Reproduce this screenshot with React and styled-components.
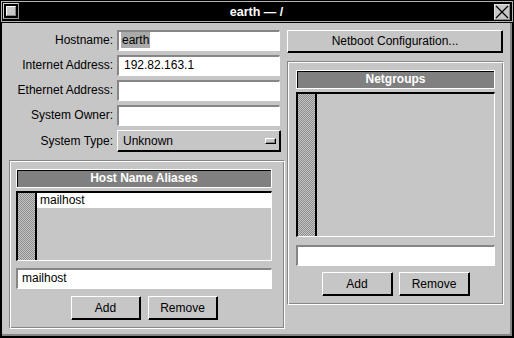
import React from "react";
import styled, { createGlobalStyle } from "styled-components";

const Global = createGlobalStyle`
  html, body { margin: 0; padding: 0; background: #000; }
  * { box-sizing: border-box; }
  body {
    font-family: "Liberation Sans", Arial, sans-serif;
    font-size: 12px;
    color: #000;
  }
`;

const grey = "#c6c6c6";
const dark = "#868686";

const Window = styled.div`
  width: 514px;
  height: 338px;
  background: #000;
  padding: 1px;
  display: flex;
  flex-direction: column;
`;

const TitleBar = styled.div`
  height: 21px;
  border: 1px solid #b4b4b4;
  display: flex;
  align-items: flex-start;
  padding: 1px 2px 0 1px;
`;

const MenuBox = styled.div`
  width: 16px;
  height: 16px;
  border: 1px solid #d0d0d0;
  border-right-color: #9a9a9a;
  border-bottom-color: #9a9a9a;
  background: #000;
  padding: 2px;
`;

const MenuInner = styled.div`
  width: 100%;
  height: 100%;
  background: ${grey};
  border: 1px solid #fff;
  border-right-color: ${dark};
  border-bottom-color: ${dark};
`;

const Title = styled.div`
  flex: 1;
  text-align: center;
  color: #fff;
  font-weight: bold;
  font-size: 12.5px;
  line-height: 18px;
`;

const CloseBox = styled.div`
  width: 16px;
  height: 16px;
  margin-top: 1px;
  background: ${grey};
  border: 1px solid #e0e0e0;
  border-right-color: ${dark};
  border-bottom-color: ${dark};
  display: flex;
`;

const Body = styled.div`
  flex: 1;
  margin: 1px 0 1px 1px;
  width: 510px;
  background: ${grey};
  border-right: 2px solid ${dark};
  border-bottom: 2px solid ${dark};
  display: grid;
  grid-template-columns: 276px 217px;
  column-gap: 2px;
  align-items: start;
  padding: 7px 0 0 7px;
`;

const Column = styled.div`
  display: flex;
  flex-direction: column;
`;

const Row = styled.div`
  display: grid;
  grid-template-columns: 104px ${p => p.$fieldWidth || 163}px;
  column-gap: 4px;
  margin-bottom: 4px;
`;

const Label = styled.div`
  text-align: right;
  line-height: ${p => p.$h || 21}px;
  white-space: nowrap;
`;

const Field = styled.div`
  height: 21px;
  background: #fff;
  border-style: solid;
  border-width: 2px 1px 1px 2px;
  border-color: ${dark} #fff #fff ${dark};
  padding-left: ${p => p.$pad || 3}px;
  line-height: 17px;
  white-space: nowrap;
  overflow: hidden;
`;

const Selected = styled.span`
  background: #ababab;
  padding: 1px 1px;
`;

const Raised = styled.div`
  background: ${grey};
  border-style: solid;
  border-width: 1px;
  border-color: #fff #000 #000 #fff;
  box-shadow: inset -1px -1px 0 #000;
`;

const OptionMenu = styled(Raised)`
  height: 22px;
  display: flex;
  align-items: center;
  justify-content: space-between;
  padding: 0 4px 0 5px;
`;

const Indicator = styled.div`
  width: 11px;
  height: 6px;
  background: ${grey};
  border: 1px solid #fff;
  border-right-color: #000;
  border-bottom-color: #000;
  box-shadow: inset -1px -1px 0 ${dark};
`;

const Button = styled(Raised)`
  width: ${p => p.$w}px;
  height: ${p => p.$h || 24}px;
  display: flex;
  align-items: center;
  justify-content: center;
  padding-bottom: 1px;
`;

// 홈이 파인 테두리 (etched in)
const Frame = styled.div`
  border: 1px solid;
  border-color: ${dark} #fff #fff ${dark};
  box-shadow: inset 1px 1px 0 #fff, inset -1px -1px 0 ${dark};
  padding: ${p => p.$pad};
  height: ${p => p.$h}px;
  margin-top: ${p => p.$mt}px;
  display: flex;
  flex-direction: column;
`;

const Header = styled.div`
  height: 19px;
  background: #808080;
  border: 1px solid #fff;
  box-shadow: inset 1px 1px 0 #000;
  color: #fff;
  font-weight: bold;
  text-align: center;
  line-height: 17px;
`;

const List = styled.div`
  margin-top: 3px;
  height: ${p => (p.$h ? `${p.$h}px` : "auto")};
  flex: ${p => (p.$h ? "none" : 1)};
  border-style: solid;
  border-width: 2px 1px 1px 2px;
  border-color: #000 #fff #fff #000;
  display: flex;
`;

const Stipple = styled.div`
  width: 19px;
  border-right: 2px solid #000;
  background: repeating-conic-gradient(#8c8c8c 0 25%, ${grey} 0 50%) 0 0 / 2px 2px;
`;

const Items = styled.div`
  flex: 1;
`;

const Item = styled.div`
  height: 15px;
  line-height: 15px;
  padding-left: 3px;
  background: ${p => (p.$selected ? "#fff" : "transparent")};
`;

const ListField = styled(Field)`
  margin-top: ${p => p.$mt}px;
`;

const Buttons = styled.div`
  display: flex;
  justify-content: center;
  gap: ${p => p.$gap}px;
  margin-top: ${p => p.$mt}px;
`;

const CloseIcon = () => (
  <svg width="14" height="14" viewBox="0 0 14 14">
    <path d="M1 1 L13 13 M13 1 L1 13" stroke="#000" strokeWidth="1.2" />
  </svg>
);

const fields = [
  { label: "Hostname:", value: "earth", selected: true },
  { label: "Internet Address:", value: "192.82.163.1" },
  { label: "Ethernet Address:", value: "" },
  { label: "System Owner:", value: "" }
];

export default function App() {
  return (
    <>
      <Global />
      <Window>
        <TitleBar>
          <MenuBox>
            <MenuInner />
          </MenuBox>
          <Title>earth — /</Title>
          <CloseBox>
            <CloseIcon />
          </CloseBox>
        </TitleBar>
        <Body>
          {/* 왼쪽: 호스트 정보 + 별칭 */}
          <Column>
            {fields.map(f => (
              <Row key={f.label}>
                <Label>{f.label}</Label>
                <Field $pad={f.selected ? 2 : 5}>
                  {f.selected ? <Selected>{f.value}</Selected> : f.value}
                </Field>
              </Row>
            ))}
            <Row $fieldWidth={164}>
              <Label $h={22}>System Type:</Label>
              <OptionMenu>
                Unknown
                <Indicator />
              </OptionMenu>
            </Row>
            <Frame $pad="8px 12px 8px 6px" $h={169} $mt={4}>
              <Header>Host Name Aliases</Header>
              <List $h={70}>
                <Stipple />
                <Items>
                  <Item $selected>mailhost</Item>
                </Items>
              </List>
              <ListField $mt={7} $pad={4}>mailhost</ListField>
              <Buttons $gap={7} $mt={7}>
                <Button $w={70}>Add</Button>
                <Button $w={70}>Remove</Button>
              </Buttons>
            </Frame>
          </Column>
          {/* 오른쪽: 넷부트 + 넷그룹 */}
          <Column>
            <Button $w={216} $h={23}>Netboot Configuration...</Button>
            <Frame $pad="8px" $h={244} $mt={8}>
              <Header>Netgroups</Header>
              <List>
                <Stipple />
                <Items />
              </List>
              <ListField $mt={8} />
              <Buttons $gap={6} $mt={6}>
                <Button $w={71}>Add</Button>
                <Button $w={71}>Remove</Button>
              </Buttons>
            </Frame>
          </Column>
        </Body>
      </Window>
    </>
  );
}
